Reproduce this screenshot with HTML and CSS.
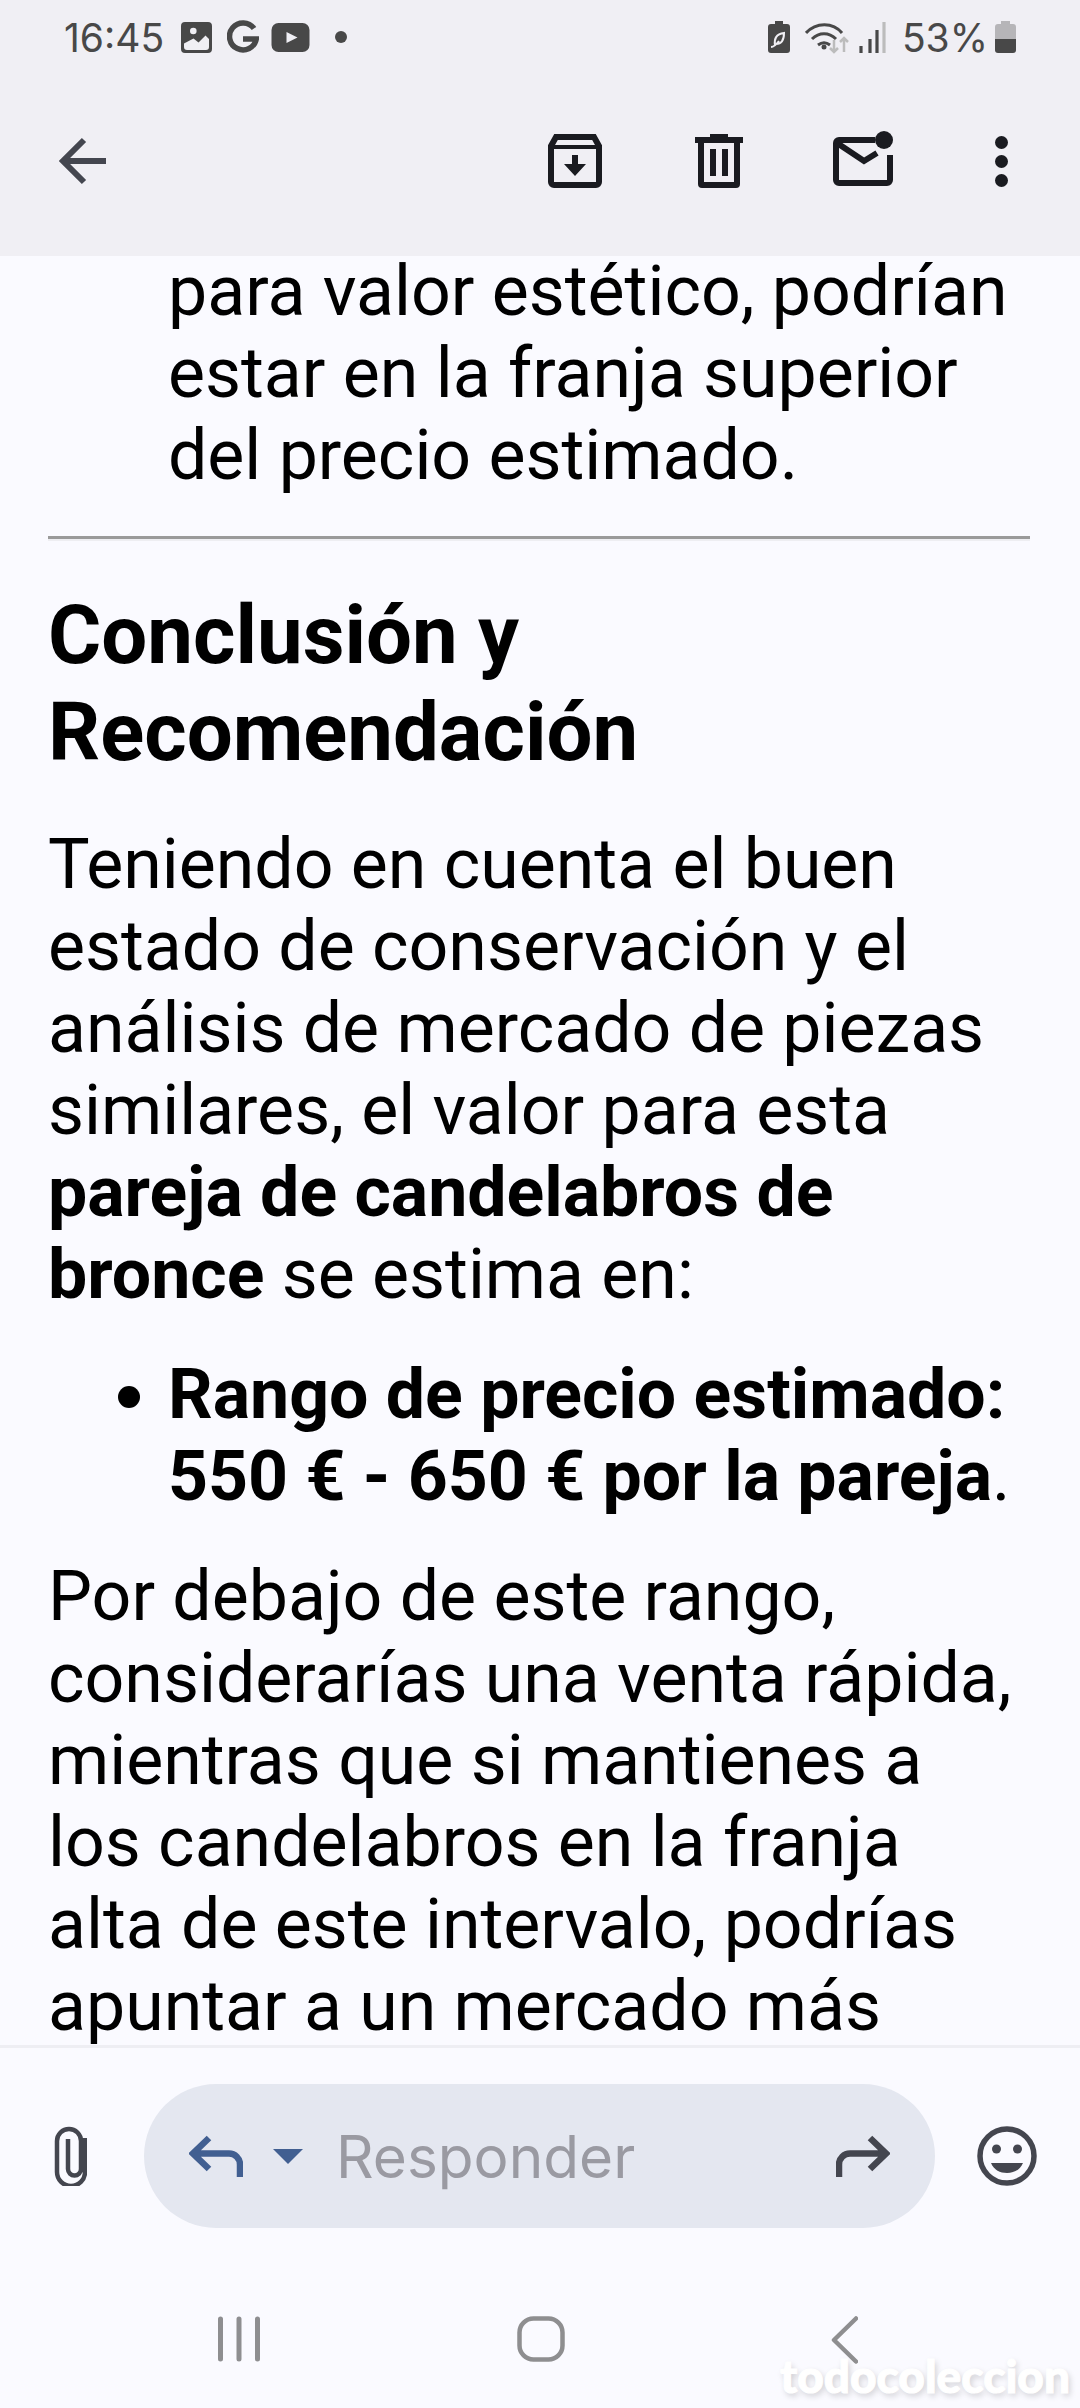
FILE: index.html
```html
<!DOCTYPE html>
<html lang="es">
<head>
    <meta charset="UTF-8">
    <meta name="viewport" content="width=device-width, initial-scale=1.0">
    <title>Conclusión y Recomendación</title>
    <link rel="stylesheet" href="styles.css">
</head>
<body>
    <div class="app">
        <header class="top">
            <div class="status">
                <div class="status-left">
                    <span class="time">16:45</span>
                    <svg class="st-pic" viewBox="0 0 31 31"><path fill="#484848" fill-rule="evenodd" d="M4 0h23a4 4 0 0 1 4 4v23a4 4 0 0 1-4 4H4a4 4 0 0 1-4-4V4a4 4 0 0 1 4-4zM9 9a3.300 3.300 0 1 0 6.600 0A3.300 3.300 0 0 0 9 9zM3 21.500V25a3 3 0 0 0 3 3h19a3 3 0 0 0 3-3V17l-3.500-3.500-7 7-5-4z"/></svg>
                    <svg class="st-g" viewBox="0 0 32 34"><path fill="none" stroke="#484848" stroke-width="5.500" d="M27 8.500A13.500 13.500 0 1 0 29.300 19H16"/></svg>
                    <svg class="st-yt" viewBox="0 0 38 29"><rect width="38" height="29" rx="7" fill="#484848"/><path fill="#f0eff4" d="M15 9l11 5.500L15 20z"/></svg>
                    <span class="st-dot"></span>
                </div>
                <div class="status-right">
                    <svg class="st-leaf" viewBox="0 0 22 32"><path fill="#484848" d="M7 0h8v3h4a3 3 0 0 1 3 3v23a3 3 0 0 1-3 3H3a3 3 0 0 1-3-3V6a3 3 0 0 1 3-3h4z"/><path fill="none" stroke="#f0eff4" stroke-width="2" d="M7 24c-1-6 1-11 9-12 0 7-2 11-8 11M3 26c3 0 5-2 8-6"/></svg>
                    <svg class="st-wifi" viewBox="0 0 44 33"><g fill="none" stroke="#484848" stroke-width="3"><path d="M1 12c10-11 27-11 36 0"/><path d="M7 18c7-7 17-7 24 0"/><path d="M13 24c4-3 8-3 12 0"/></g><circle cx="19" cy="26" r="2.500" fill="#484848"/><path fill="none" stroke="#bcbcbc" stroke-width="2.500" d="M29 19v12M25 27l4 4 4-4M39 31V17M35 21l4-4 4 4"/></svg>
                    <svg class="st-signal" viewBox="0 0 27 31"><path stroke-width="3.200" stroke="#484848" d="M2 24v7M11 17v14M18 8v23"/><path stroke-width="3.200" stroke="#bcbcbc" d="M25 0v31"/></svg>
                    <span class="pct">53%</span>
                    <svg class="st-batt" viewBox="0 0 21 32"><path fill="#b6b5b8" d="M6 0h9v3h3a3 3 0 0 1 3 3v12H0V6a3 3 0 0 1 3-3h3z"/><path fill="#484848" d="M0 18h21v11a3 3 0 0 1-3 3H3a3 3 0 0 1-3-3z"/></svg>
                </div>
            </div>
            <div class="toolbar">
                <svg class="tb-back" viewBox="0 0 48 48"><path fill="none" stroke="#44464f" stroke-width="6" d="M48 24H5M26 3L5 24l21 21"/></svg>
                <div class="actions">
                    <svg class="tb-archive" viewBox="0 0 54 54"><path fill="none" stroke="#1a1b20" stroke-width="6" d="M3 12l5-9h38l5 9v36a3 3 0 0 1-3 3H6a3 3 0 0 1-3-3z"/><path fill="none" stroke="#1a1b20" stroke-width="4" d="M4 13h46"/><path fill="#1a1b20" d="M24 21h6v9h8L27 42 16 30h8z"/></svg>
                    <svg class="tb-trash" viewBox="0 0 48 54"><path fill="#1a1b20" fill-rule="evenodd" d="M15 0h18v3h15v6H0V3h15zM3 9h6v39h30V9h6v41a4 4 0 0 1-4 4H7a4 4 0 0 1-4-4z"/><path fill="#1a1b20" d="M15 15h6v27h-6zM27 15h6v27h-6z"/></svg>
                    <svg class="tb-mail" viewBox="0 0 60 55"><path fill="none" stroke="#1a1b20" stroke-width="6" d="M42 9H6a3 3 0 0 0-3 3v37a3 3 0 0 0 3 3h48a3 3 0 0 0 3-3V24"/><path fill="none" stroke="#1a1b20" stroke-width="6" d="M4 12l27 18 13-8"/><circle cx="51" cy="9" r="9" fill="#1a1b20"/></svg>
                    <svg class="tb-more" viewBox="0 0 13 51"><circle cx="6.500" cy="6.500" r="6.500" fill="#1a1b20"/><circle cx="6.500" cy="25.500" r="6.500" fill="#1a1b20"/><circle cx="6.500" cy="44.500" r="6.500" fill="#1a1b20"/></svg>
                </div>
            </div>
        </header>

        <main class="mail">
            <ul class="list first">
                <li class="no-bullet">para valor estético, podrían estar en la franja superior del precio estimado.</li>
            </ul>
            <hr class="rule">
            <h2>Conclusión y Recomendación</h2>
            <p>Teniendo en cuenta el buen estado de conservación y el análisis de mercado de piezas similares, el valor para esta <strong>pareja de candelabros de bronce</strong> se estima en:</p>
            <ul class="list">
                <li><strong>Rango de precio estimado: 550 € - 650 € por la pareja</strong>.</li>
            </ul>
            <p>Por debajo de este rango, considerarías una venta rápida, mientras que si mantienes a los candelabros en la franja alta de este intervalo, podrías apuntar a un mercado más selecto y paciente.</p>
        </main>

        <footer class="bottom">
            <div class="reply-row">
                <svg class="clip" viewBox="0 0 33 60"><path fill="none" stroke="#44464f" stroke-width="4.500" d="M31 12v34a14 14 0 0 1-28 0V15a12 12 0 0 1 24 0v28a6.500 6.500 0 0 1-13 0V13"/></svg>
                <div class="reply-box">
                    <svg class="reply-ic" viewBox="0 0 54 42"><path fill="none" stroke="#415f91" stroke-width="6.500" d="M20 3L4 18.500 20 34M4 18.500h36a11 11 0 0 1 11 11V42"/></svg>
                    <span class="caret"></span>
                    <span class="placeholder">Responder</span>
                    <svg class="forward-ic" viewBox="0 0 54 42"><path fill="none" stroke="#44464f" stroke-width="6.500" d="M34 3l16 15.500L34 34M50 18.500H14a11 11 0 0 0-11 11V42"/></svg>
                </div>
                <svg class="smile" viewBox="0 0 60 60"><circle cx="30" cy="30" r="27" fill="none" stroke="#44464f" stroke-width="5.500"/><circle cx="19.500" cy="23" r="4.500" fill="#44464f"/><circle cx="40.500" cy="23" r="4.500" fill="#44464f"/><path fill="#44464f" d="M14 37h32c-3 7-9 10-16 10s-13-3-16-10z"/></svg>
            </div>
            <nav class="navbar">
                <svg class="nav-recent" viewBox="0 0 42 46"><path stroke="#8e8e90" stroke-width="5" stroke-linecap="round" d="M2.500 3v40M21 3v40M39.500 3v40"/></svg>
                <svg class="nav-home" viewBox="0 0 48 46"><rect x="2.500" y="2.500" width="43" height="41" rx="14" fill="none" stroke="#8e8e90" stroke-width="4.500"/></svg>
                <svg class="nav-back" viewBox="0 0 27 48"><path fill="none" stroke="#8e8e90" stroke-width="4.500" stroke-linecap="round" stroke-linejoin="round" d="M25 2.500L3 24l22 21.500"/></svg>
            </nav>
        </footer>

        <div class="watermark">todocoleccion</div>
    </div>
</body>
</html>
```

FILE: styles.css
```css
* {
    box-sizing: border-box;
}

html, body {
    margin: 0;
    padding: 0;
}

body {
    font-family: Roboto, sans-serif;
    background-color: #fafaff;
}

.app {
    position: relative;
    width: 1080px;
    height: 2408px;
    display: flex;
    flex-direction: column;
    overflow: hidden;
}

svg {
    display: block;
    flex: none;
}

/* status bar + toolbar */
.top {
    height: 256px;
    flex: none;
    background-color: #f0eff4;
}

.status {
    height: 72px;
    padding: 2px 64px 0 64px;
    display: flex;
    justify-content: space-between;
    align-items: center;
}

.status-left, .status-right {
    display: flex;
    align-items: center;
}

.time, .pct {
    font-family: Inter, Roboto, sans-serif;
    font-size: 39px;
    color: #484848;
}

.st-pic { width: 31px; height: 31px; margin-left: 17px; }
.st-g { width: 32px; height: 34px; margin-left: 15px; }
.st-yt { width: 39px; height: 29px; margin-left: 12px; }

.st-dot {
    width: 12px;
    height: 12px;
    border-radius: 50%;
    background-color: #484848;
    margin-left: 25px;
}

.st-leaf { width: 22px; height: 32px; }
.st-wifi { width: 44px; height: 33px; margin-left: 15px; }
.st-signal { width: 27px; height: 31px; margin-left: 10px; }
.pct { margin-left: 16px; }
.st-batt { width: 21px; height: 32px; margin-left: 7px; }

.toolbar {
    height: 184px;
    padding: 0 0 6px 58px;
    display: flex;
    justify-content: space-between;
    align-items: center;
}

.tb-back { width: 48px; height: 48px; }

.actions {
    display: flex;
    align-items: center;
    padding-right: 72px;
}

.tb-archive { width: 54px; height: 54px; }
.tb-trash { width: 48px; height: 54px; margin-left: 93px; }
.tb-mail { width: 60px; height: 55px; margin: -6px 0 0 90px; }
.tb-more { width: 13px; height: 51px; margin-left: 102px; }

/* message body */
.mail {
    flex: 1;
    min-height: 0;
    overflow: hidden;
    padding: 0 50px 0 48px;
    font-size: 69.8px;
    line-height: 82px;
    color: #000;
}

.list {
    margin: 0;
    padding: 0 0 0 120px;
}

.first {
    margin-top: -6px;
}

.no-bullet {
    list-style: none;
}

.rule {
    height: 5px;
    margin: 40px 0 0;
    border: 0;
    border-top: 3px solid #9a9a9a;
    border-bottom: 2px solid #eeeef2;
}

h2 {
    font-size: 81.5px;
    line-height: 97px;
    font-weight: 700;
    margin: 46px 0 0;
}

p {
    margin: 42px 12px 0 0;
}

p + .list {
    margin-top: 38px;
}

.list + p {
    margin-top: 38px;
}

/* reply bar + nav bar */
.bottom {
    height: 363px;
    flex: none;
    border-top: 3px solid #eeeef3;
}

.reply-row {
    height: 180px;
    padding: 36px 42px 0 54px;
    display: flex;
    align-items: flex-start;
}

.clip {
    width: 33px;
    height: 60px;
    margin-top: 42px;
}

.reply-box {
    width: 791px;
    height: 144px;
    margin-left: 57px;
    padding: 0 45px;
    border-radius: 72px;
    background-color: #e4e7f0;
    display: flex;
    align-items: center;
}

.reply-ic { width: 54px; height: 42px; }

.caret {
    width: 0;
    height: 0;
    margin-left: 30px;
    border-left: 15px solid transparent;
    border-right: 15px solid transparent;
    border-top: 15px solid #415f91;
}

.placeholder {
    flex: 1;
    margin-left: 33px;
    font-family: Inter, Roboto, sans-serif;
    font-size: 58.5px;
    color: #9a9aa2;
}

.forward-ic { width: 54px; height: 42px; }

.smile {
    width: 60px;
    height: 60px;
    margin: 42px 0 0 42px;
}

.navbar {
    height: 180px;
    padding: 88px 0 0 218px;
    display: flex;
    align-items: flex-start;
}

.nav-recent { width: 42px; height: 46px; }
.nav-home { width: 48px; height: 46px; margin-left: 257px; }
.nav-back { width: 27px; height: 48px; margin-left: 266px; }

/* stock photo site watermark, sits over everything */
.watermark {
    position: absolute;
    right: 10px;
    bottom: 8px;
    font-family: Lato, sans-serif;
    font-weight: 900;
    font-size: 46px;
    line-height: 48px;
    color: #fff;
    -webkit-text-stroke: 1px #fff;
    text-shadow: 2px 3px 6px rgba(0, 0, 0, 0.18);
}
```
